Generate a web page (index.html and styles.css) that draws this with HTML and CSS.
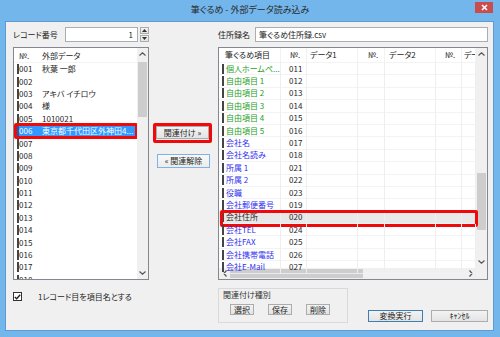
FILE: index.html
```html
<!DOCTYPE html>
<html lang="ja">
<head>
<meta charset="utf-8">
<title>筆ぐるめ - 外部データ読み込み</title>
<link rel="stylesheet" href="styles.css">
</head>
<body>
<div class="window">
  <div class="titlebar">
    <span></span>
    <span class="title">筆ぐるめ - 外部データ読み込み</span>
    <span class="close-wrap"><span class="close"><svg width="7" height="7" viewBox="0 0 7 7"><path d="M1 1L6 6M6 1L1 6" stroke="#fff" stroke-width="1.6"/></svg></span></span>
  </div>
  <div class="client">
    <div class="top-left">
      <span class="lbl">レコード番号</span>
      <div class="spin-group">
        <div class="textbox num">1</div>
        <div class="spin">
          <span class="spin-btn"><svg width="5" height="3" viewBox="0 0 5 3"><path d="M0 3L2.5 0L5 3Z" fill="#333"/></svg></span>
          <span class="spin-btn"><svg width="5" height="3" viewBox="0 0 5 3"><path d="M0 0L2.5 3L5 0Z" fill="#333"/></svg></span>
        </div>
      </div>
    </div>
    <div></div>
    <div class="top-right">
      <span class="lbl">住所録名</span>
      <div class="textbox file">筆ぐるめ住所録.csv</div>
    </div>

    <div class="list">
      <div class="list-body">
        <div class="list-head"><span class="c-no">№.</span><span class="c-data">外部データ</span></div>
        <div class="list-row"><span class="mark"></span><span class="c-no">001</span><span class="c-data">秋葉 一郎</span></div>
        <div class="list-row"><span class="mark"></span><span class="c-no">002</span><span class="c-data"></span></div>
        <div class="list-row"><span class="mark"></span><span class="c-no">003</span><span class="c-data">アキバ イチロウ</span></div>
        <div class="list-row"><span class="mark"></span><span class="c-no">004</span><span class="c-data">様</span></div>
        <div class="list-row"><span class="mark"></span><span class="c-no">005</span><span class="c-data">1010021</span></div>
        <div class="list-row selected"><span class="mark"></span><span class="c-no">006</span><span class="c-data">東京都千代田区外神田4...</span></div>
        <div class="list-row"><span class="mark"></span><span class="c-no">007</span><span class="c-data"></span></div>
        <div class="list-row"><span class="mark"></span><span class="c-no">008</span><span class="c-data"></span></div>
        <div class="list-row"><span class="mark"></span><span class="c-no">009</span><span class="c-data"></span></div>
        <div class="list-row"><span class="mark"></span><span class="c-no">010</span><span class="c-data"></span></div>
        <div class="list-row"><span class="mark"></span><span class="c-no">011</span><span class="c-data"></span></div>
        <div class="list-row"><span class="mark"></span><span class="c-no">012</span><span class="c-data"></span></div>
        <div class="list-row"><span class="mark"></span><span class="c-no">013</span><span class="c-data"></span></div>
        <div class="list-row"><span class="mark"></span><span class="c-no">014</span><span class="c-data"></span></div>
        <div class="list-row"><span class="mark"></span><span class="c-no">015</span><span class="c-data"></span></div>
        <div class="list-row"><span class="mark"></span><span class="c-no">016</span><span class="c-data"></span></div>
        <div class="list-row"><span class="mark"></span><span class="c-no">017</span><span class="c-data"></span></div>
        <div class="list-row"><span class="mark"></span><span class="c-no">018</span><span class="c-data"></span></div>
      </div>
      <div class="vscroll">
        <span class="arrow"><svg width="7" height="4" viewBox="0 0 7 4"><path d="M0.5 3.5L3.5 0.8L6.5 3.5" fill="none" stroke="#555" stroke-width="1.2"/></svg></span>
        <div class="track"><div class="thumb list-thumb"></div></div>
        <span class="arrow"><svg width="7" height="4" viewBox="0 0 7 4"><path d="M0.5 0.5L3.5 3.2L6.5 0.5" fill="none" stroke="#555" stroke-width="1.2"/></svg></span>
      </div>
    </div>

    <div class="mid">
      <div class="hl"><button class="btn link">関連付け »</button></div>
      <button class="btn unlink">« 関連解除</button>
    </div>

    <div class="grid">
      <div class="grid-top">
        <div class="grid-cols">
          <div class="g-row g-head">
            <span class="g1">筆ぐるめ項目</span><span class="g2">№.</span><span class="g3">データ1</span><span class="g4">№.</span><span class="g5">データ2</span><span class="g6">№.</span><span class="g7">デー</span>
          </div>
          <div class="g-rows">
            <div class="g-row green"><span class="g1"><i class="mark"></i>個人ホームペ...</span><span class="g2">011</span><span class="g3"></span><span class="g4"></span><span class="g5"></span><span class="g6"></span><span class="g7"></span></div>
            <div class="g-row green"><span class="g1"><i class="mark"></i>自由項目 1</span><span class="g2">012</span><span class="g3"></span><span class="g4"></span><span class="g5"></span><span class="g6"></span><span class="g7"></span></div>
            <div class="g-row green"><span class="g1"><i class="mark"></i>自由項目 2</span><span class="g2">013</span><span class="g3"></span><span class="g4"></span><span class="g5"></span><span class="g6"></span><span class="g7"></span></div>
            <div class="g-row green"><span class="g1"><i class="mark"></i>自由項目 3</span><span class="g2">014</span><span class="g3"></span><span class="g4"></span><span class="g5"></span><span class="g6"></span><span class="g7"></span></div>
            <div class="g-row green"><span class="g1"><i class="mark"></i>自由項目 4</span><span class="g2">015</span><span class="g3"></span><span class="g4"></span><span class="g5"></span><span class="g6"></span><span class="g7"></span></div>
            <div class="g-row green"><span class="g1"><i class="mark"></i>自由項目 5</span><span class="g2">016</span><span class="g3"></span><span class="g4"></span><span class="g5"></span><span class="g6"></span><span class="g7"></span></div>
            <div class="g-row blue"><span class="g1"><i class="mark"></i>会社名</span><span class="g2">017</span><span class="g3"></span><span class="g4"></span><span class="g5"></span><span class="g6"></span><span class="g7"></span></div>
            <div class="g-row blue"><span class="g1"><i class="mark"></i>会社名読み</span><span class="g2">018</span><span class="g3"></span><span class="g4"></span><span class="g5"></span><span class="g6"></span><span class="g7"></span></div>
            <div class="g-row blue"><span class="g1"><i class="mark"></i>所属 1</span><span class="g2">021</span><span class="g3"></span><span class="g4"></span><span class="g5"></span><span class="g6"></span><span class="g7"></span></div>
            <div class="g-row blue"><span class="g1"><i class="mark"></i>所属 2</span><span class="g2">022</span><span class="g3"></span><span class="g4"></span><span class="g5"></span><span class="g6"></span><span class="g7"></span></div>
            <div class="g-row blue"><span class="g1"><i class="mark"></i>役職</span><span class="g2">023</span><span class="g3"></span><span class="g4"></span><span class="g5"></span><span class="g6"></span><span class="g7"></span></div>
            <div class="g-row blue"><span class="g1"><i class="mark"></i>会社郵便番号</span><span class="g2">019</span><span class="g3"></span><span class="g4"></span><span class="g5"></span><span class="g6"></span><span class="g7"></span></div>
            <div class="g-row current"><span class="g1"><i class="mark"></i>会社住所</span><span class="g2">020</span><span class="g3"></span><span class="g4"></span><span class="g5"></span><span class="g6"></span><span class="g7"></span></div>
            <div class="g-row blue"><span class="g1"><i class="mark"></i>会社TEL</span><span class="g2">024</span><span class="g3"></span><span class="g4"></span><span class="g5"></span><span class="g6"></span><span class="g7"></span></div>
            <div class="g-row blue"><span class="g1"><i class="mark"></i>会社FAX</span><span class="g2">025</span><span class="g3"></span><span class="g4"></span><span class="g5"></span><span class="g6"></span><span class="g7"></span></div>
            <div class="g-row blue"><span class="g1"><i class="mark"></i>会社携帯電話</span><span class="g2">026</span><span class="g3"></span><span class="g4"></span><span class="g5"></span><span class="g6"></span><span class="g7"></span></div>
            <div class="g-row blue"><span class="g1"><i class="mark"></i>会社E-Mail</span><span class="g2">027</span><span class="g3"></span><span class="g4"></span><span class="g5"></span><span class="g6"></span><span class="g7"></span></div>
          </div>
        </div>
        <div class="vscroll">
          <span class="arrow"><svg width="7" height="4" viewBox="0 0 7 4"><path d="M0.5 3.5L3.5 0.8L6.5 3.5" fill="none" stroke="#555" stroke-width="1.2"/></svg></span>
          <div class="track"><div class="thumb grid-thumb"></div></div>
          <span class="arrow"><svg width="7" height="4" viewBox="0 0 7 4"><path d="M0.5 0.5L3.5 3.2L6.5 0.5" fill="none" stroke="#555" stroke-width="1.2"/></svg></span>
        </div>
      </div>
      <div class="grid-bottom">
        <div class="hscroll">
          <span class="harrow"><svg width="4" height="7" viewBox="0 0 4 7"><path d="M3.5 0.5L0.8 3.5L3.5 6.5" fill="none" stroke="#555" stroke-width="1.2"/></svg></span>
          <div class="htrack"><div class="hthumb"></div></div>
          <span class="harrow"><svg width="4" height="7" viewBox="0 0 4 7"><path d="M0.5 0.5L3.2 3.5L0.5 6.5" fill="none" stroke="#555" stroke-width="1.2"/></svg></span>
        </div>
        <div class="corner"></div>
      </div>
    </div>

    <div class="bottom-left">
      <span class="check"><svg width="7" height="6" viewBox="0 0 7 6"><path d="M0.8 3L2.7 4.8L6.2 0.8" fill="none" stroke="#222" stroke-width="1.4"/></svg></span>
      <span class="check-label">1レコード目を項目名とする</span>
    </div>
    <div></div>
    <div class="bottom-right">
      <div class="group">
        <div class="group-title">関連付け種別</div>
        <div class="group-btns">
          <button class="btn small">選択</button>
          <button class="btn small">保存</button>
          <button class="btn small">削除</button>
        </div>
      </div>
      <div class="actions">
        <button class="btn action default">変換実行</button>
        <button class="btn action cancel">ｷｬﾝｾﾙ</button>
      </div>
    </div>
  </div>
</div>
</body>
</html>
```

FILE: styles.css
```css
* { box-sizing: border-box; margin: 0; padding: 0; }
html, body { width: 500px; height: 337px; overflow: hidden; }
body {
  font-family: "Noto Sans CJK JP", "Liberation Sans", sans-serif;
  font-size: 8px;
  line-height: 1;
  color: #1e1e1e;
  font-feature-settings: "palt";
  background: #72b6ec;
}
.window {
  width: 500px;
  height: 337px;
  background: #72b6ec;
  display: flex;
  flex-direction: column;
}
.titlebar {
  height: 21px;
  display: grid;
  grid-template-columns: 1fr auto 1fr;
  align-items: start;
}
.title {
  font-size: 9px;
  line-height: 20px;
  color: #2a2a2a;
}
.close-wrap {
  display: flex;
  justify-content: flex-end;
  padding-right: 7px;
}
.close {
  width: 18px;
  height: 11px;
  margin-top: 2px;
  background: #c94d4d;
  display: flex;
  align-items: center;
  justify-content: center;
}
.client {
  flex: 1;
  margin: 0 6px 6px 5px;
  background: #f0f0f0;
  border: 1px solid #5f9bd2;
  padding: 5px 5px 0 7px;
  display: grid;
  grid-template-columns: 136px 69px 270px;
  grid-template-rows: 15px 238px 1fr;
}
.lbl { line-height: 15px; color: #222; }
.top-left, .top-right {
  display: flex;
  align-items: center;
}
.top-left { justify-content: space-between; }
.spin-group { display: flex; gap: 2px; height: 15px; }
.textbox {
  background: #fff;
  border: 1px solid #abadb3;
  height: 15px;
  line-height: 13px;
}
.num { width: 73px; text-align: right; padding-right: 4px; }
.spin {
  width: 9px;
  display: flex;
  flex-direction: column;
  gap: 1px;
}
.spin-btn {
  flex: 1;
  background: linear-gradient(#f2f2f2, #e3e3e3);
  border: 1px solid #acacac;
  display: flex;
  align-items: center;
  justify-content: center;
}
.top-right .lbl { width: 37px; }
.file { flex: 1; padding-left: 3px; }

/* left list */
.list {
  margin-top: 5px;
  height: 233px;
  background: #fff;
  border: 1px solid #828790;
  display: flex;
}
.list-body {
  flex: 1;
  overflow: hidden;
}
.list-head {
  height: 15px;
  line-height: 15px;
  display: flex;
  padding-left: 5px;
  border-bottom: 1px solid #f4f4f4;
}
.list-head .c-no { width: 23px; }
.list-row {
  height: 12.4px;
  display: flex;
  align-items: center;
  position: relative;
}
.list-row .mark {
  margin-left: 3px;
  width: 1.5px;
  height: 10px;
  background: #444;
}
.list-row .c-no { width: 23.5px; padding-left: 0.5px; }
.list-row.selected { background: #3399ff; color: #fff; }
.list-row.selected .mark { background: #1b5fa8; }
.list-row.selected::after {
  content: "";
  position: absolute;
  left: 0;
  right: -1px;
  top: -2px;
  bottom: -2px;
  border: 3px solid #ee0a0a;
  border-radius: 2px;
}

.vscroll {
  width: 11px;
  background: #f0f0f0;
  display: flex;
  flex-direction: column;
}
.arrow {
  height: 12px;
  display: flex;
  align-items: center;
  justify-content: center;
}
.track { flex: 1; padding: 0 1px; }
.thumb { background: #cdcdcd; }
.list-thumb { margin-top: 2px; height: 55px; }
.grid-thumb { margin-top: 113px; height: 57px; }

/* middle */
.mid {
  margin-top: 5px;
  padding-left: 7px;
  padding-top: 79px;
  display: flex;
  flex-direction: column;
  align-items: flex-start;
}
.btn {
  font-family: inherit;
  font-size: 8px;
  font-feature-settings: "palt";
  color: #1e1e1e;
  background: linear-gradient(#f3f3f3, #e4e4e4);
  border: 1px solid #acacac;
  display: flex;
  align-items: center;
  justify-content: center;
  line-height: 1;
}
.hl { position: relative; }
.hl::after {
  content: "";
  position: absolute;
  left: -3px;
  right: -3px;
  top: -3px;
  bottom: -4px;
  border: 3px solid #ee0a0a;
  border-radius: 2px;
}
.link { width: 53px; height: 13px; }
.unlink {
  margin-top: 15px;
  margin-left: 1px;
  width: 53px;
  height: 14px;
  border-color: #7fb2e5;
  background: linear-gradient(#f8f8f8, #ececec);
}

/* right grid */
.grid {
  margin-top: 5px;
  height: 233px;
  background: #fff;
  border: 1px solid #828790;
  display: flex;
  flex-direction: column;
}
.grid-top { height: 220px; display: flex; }
.grid-cols {
  flex: 1;
  display: flex;
  flex-direction: column;
  position: relative;
  z-index: 1;
}
.g-row {
  display: grid;
  grid-template-columns: 62px 26px 51px 27px 51px 26px 14px;
  height: 12.4px;
  position: relative;
}
.g-row > span {
  border-right: 1px solid #eeeeee;
  border-bottom: 1px solid #f3f3f3;
  white-space: nowrap;
  overflow: hidden;
  display: flex;
  align-items: center;
}
.g-head { height: 15px; flex: none; }
.g-head > span { border-bottom: 1px solid #f3f3f3; border-right-color: #f2f2f2; }
.g-head .g1 { padding-left: 6px; }
.g-head .g2 { padding-left: 9px; }
.g-head .g3 { padding-left: 3px; }
.g-head .g4 { padding-left: 10px; }
.g-head .g5 { padding-left: 4px; }
.g-head .g6 { padding-left: 9px; }
.g-head .g7 { padding-left: 2px; letter-spacing: -0.5px; }
.g-rows {
  flex: 1;
  clip-path: inset(0 -6px 0 -6px);
}
.g-rows .g1 { padding-left: 3px; }
.g-rows .g2 { padding-left: 8px; color: #1e1e1e; }
.g-rows .mark {
  width: 1.5px;
  height: 10px;
  background: #444;
  margin-right: 2.5px;
  flex: none;
}
.green .g1 { color: #23a023; }
.blue .g1 { color: #2f2ff0; }
.current { background: #e8e8e8; }
.current .g1 { color: #1e1e1e; }
.current::after {
  content: "";
  position: absolute;
  left: 1px;
  right: -2px;
  top: -2px;
  bottom: -3px;
  border: 3px solid #ee0a0a;
  border-radius: 2px;
}
.grid-bottom { height: 11px; display: flex; }
.hscroll {
  flex: 1;
  display: flex;
  background: #f0f0f0;
}
.harrow {
  width: 11px;
  display: flex;
  align-items: center;
  justify-content: center;
}
.htrack { flex: 1; padding: 1px 0; }
.hthumb { width: 133px; height: 100%; background: #cdcdcd; }
.corner { width: 11px; background: #f0f0f0; }

/* bottom */
.bottom-left {
  display: flex;
  align-items: flex-start;
  padding-top: 12px;
}
.check {
  width: 9px;
  height: 9px;
  background: #fff;
  border: 1px solid #333;
  display: flex;
  align-items: center;
  justify-content: center;
}
.check-label { margin-left: 16px; line-height: 9px; }
.bottom-right {
  display: flex;
  align-items: flex-start;
}
.group {
  margin-top: 8px;
  width: 130px;
  height: 35px;
  border: 1px solid #d9d9d9;
  padding: 1px 0 0 4px;
}
.group-title { line-height: 10px; color: #333; }
.group-btns {
  display: flex;
  margin-top: 4px;
  padding-left: 7px;
  gap: 14px;
}
.small { width: 24px; height: 11px; }
.actions {
  margin-left: auto;
  margin-top: 30px;
  display: flex;
  gap: 8px;
}
.action { height: 12px; }
.default { width: 55px; border-color: #3c7fb1; }
.cancel { width: 57px; }
```
